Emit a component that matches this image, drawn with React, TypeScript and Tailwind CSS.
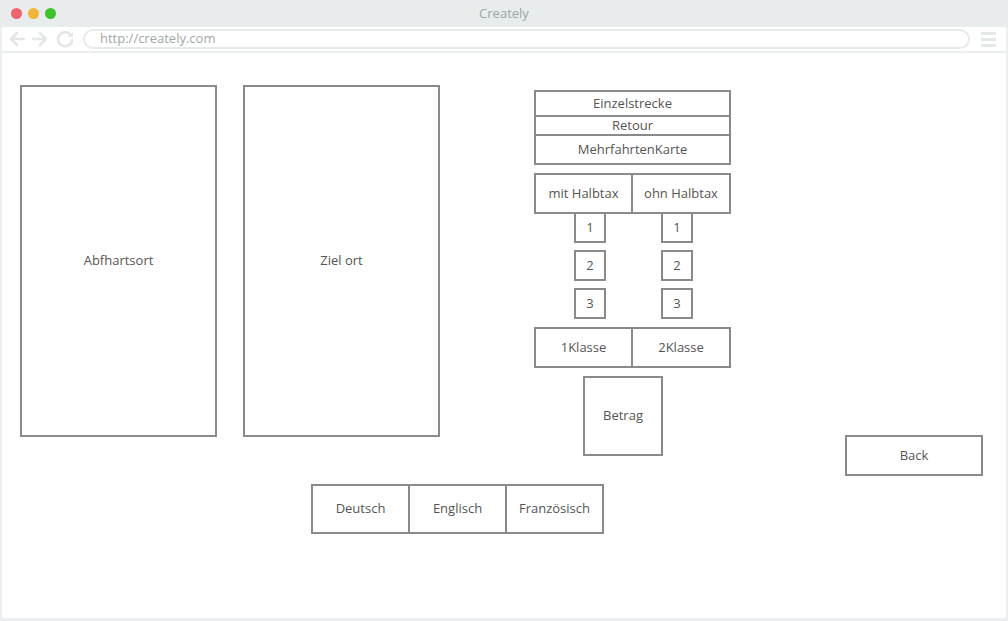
import React from 'react';

const font = { fontFamily: '"Open Sans", "Noto Sans", sans-serif' };

function Box({ className = '', children }: { className?: string; children?: React.ReactNode }) {
  return (
    <div
      className={`flex items-center justify-center border-2 border-[#8a8a8a] bg-white text-[13px] text-[#555] ${className}`}
    >
      {children}
    </div>
  );
}

export default function App() {
  return (
    <div className="w-[1008px] h-[621px] bg-white overflow-hidden" style={font}>
      {/* title bar */}
      <div className="relative flex h-[27px] items-center bg-[#e9eced] px-[11px]">
        <div className="flex gap-[6px]">
          <span className="h-[11px] w-[11px] rounded-full bg-[#ee6470]" />
          <span className="h-[11px] w-[11px] rounded-full bg-[#f0b53a]" />
          <span className="h-[11px] w-[11px] rounded-full bg-[#3ec229]" />
        </div>
        <div className="absolute left-0 right-0 top-[4px] text-center text-[13px] text-[#9ba6a4]">Creately</div>
      </div>

      {/* frame */}
      <div className="flex h-[594px] flex-col border-x-[2px] border-b-[3px] border-[#eceff0]">
        {/* address row */}
        <div className="flex h-[26px] items-center border-b-[2px] border-[#eceff0] pl-[5px] pr-[9px]">
          <svg width="18" height="16" viewBox="0 0 18 16" className="ml-[1px]">
            <path d="M16 8H3M9 2L3 8l6 6" fill="none" stroke="#e3e7e7" strokeWidth="2.6" strokeLinecap="round" strokeLinejoin="round" />
          </svg>
          <svg width="18" height="16" viewBox="0 0 18 16" className="ml-[5px]">
            <path d="M2 8h13M9 2l6 6-6 6" fill="none" stroke="#e3e7e7" strokeWidth="2.6" strokeLinecap="round" strokeLinejoin="round" />
          </svg>
          <svg width="19" height="18" viewBox="0 0 19 18" className="ml-[7px]">
            <path d="M15 5.5A7 7 0 1 0 16 10" fill="none" stroke="#e3e7e7" strokeWidth="2.6" strokeLinecap="round" />
            <path d="M17 2v5h-5z" fill="#e3e7e7" />
          </svg>
          <div className="ml-[8px] flex h-[20px] w-[887px] items-center rounded-full border-2 border-[#e6eaea] pl-[15px] text-[13px] text-[#9fa9a7]">
            http://creately.com
          </div>
          <div className="ml-[11px] flex flex-col gap-[3px]">
            <span className="h-[3px] w-[15px] bg-[#e3e7e7]" />
            <span className="h-[3px] w-[15px] bg-[#e3e7e7]" />
            <span className="h-[3px] w-[15px] bg-[#e3e7e7]" />
          </div>
        </div>

        {/* canvas */}
        <div className="flex-1">
          <div className="mt-[32px] flex items-start">
            <Box className="ml-[18px] h-[352px] w-[197px]">Abfhartsort</Box>
            <Box className="ml-[26px] h-[352px] w-[197px]">Ziel ort</Box>

            <div className="ml-[94px] mt-[5px] flex w-[197px] flex-col">
              <Box className="h-[27px]">Einzelstrecke</Box>
              <Box className="-mt-[2px] h-[21px]">Retour</Box>
              <Box className="-mt-[2px] h-[31px]">MehrfahrtenKarte</Box>

              <div className="mt-[8px] flex">
                <Box className="h-[41px] w-[99px]">mit Halbtax</Box>
                <Box className="-ml-[2px] h-[41px] w-[100px]">ohn Halbtax</Box>
              </div>

              <div className="-mt-[2px] flex">
                <div className="ml-[40px] flex flex-col gap-[7px]">
                  <Box className="h-[31px] w-[32px]">1</Box>
                  <Box className="h-[31px] w-[32px]">2</Box>
                  <Box className="h-[31px] w-[32px]">3</Box>
                </div>
                <div className="ml-[55px] flex flex-col gap-[7px]">
                  <Box className="h-[31px] w-[32px]">1</Box>
                  <Box className="h-[31px] w-[32px]">2</Box>
                  <Box className="h-[31px] w-[32px]">3</Box>
                </div>
              </div>

              <div className="mt-[8px] flex">
                <Box className="h-[41px] w-[99px]">1Klasse</Box>
                <Box className="-ml-[2px] h-[41px] w-[100px]">2Klasse</Box>
              </div>

              <Box className="ml-[49px] mt-[8px] h-[80px] w-[80px]">Betrag</Box>
            </div>

            <Box className="ml-[114px] mt-[350px] h-[41px] w-[138px]">Back</Box>
          </div>

          <div className="ml-[309px] mt-[8px] flex">
            <Box className="h-[50px] w-[99px]">Deutsch</Box>
            <Box className="-ml-[2px] h-[50px] w-[99px]">Englisch</Box>
            <Box className="-ml-[2px] h-[50px] w-[99px]">Französisch</Box>
          </div>
        </div>
      </div>
    </div>
  );
}
